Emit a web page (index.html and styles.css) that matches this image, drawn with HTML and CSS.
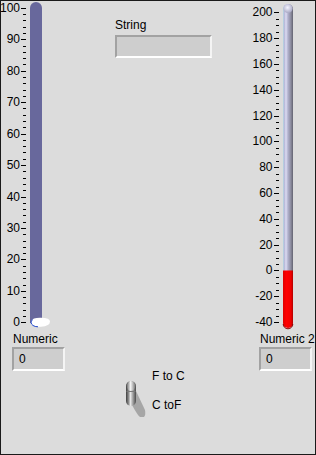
FILE: index.html
```html
<!DOCTYPE html>
<html>
<head>
<meta charset="utf-8">
<link rel="stylesheet" href="styles.css">
</head>
<body>
<div class="panel">
  <div class="col col-left">
    <svg class="gauge" width="66" height="332" viewBox="0 0 66 332">
      <g class="tick-label" text-anchor="end">
        <text x="20" y="12">100</text>
        <text x="20" y="43">90</text>
        <text x="20" y="75">80</text>
        <text x="20" y="106">70</text>
        <text x="20" y="138">60</text>
        <text x="20" y="169">50</text>
        <text x="20" y="201">40</text>
        <text x="20" y="232">30</text>
        <text x="20" y="263">20</text>
        <text x="20" y="295">10</text>
        <text x="20" y="326">0</text>
      </g>
      <path class="ticks" d="M21 8h5v1h-5zM21 39h5v1h-5zM21 71h5v1h-5zM21 102h5v1h-5zM21 134h5v1h-5zM21 165h5v1h-5zM21 197h5v1h-5zM21 228h5v1h-5zM21 259h5v1h-5zM21 291h5v1h-5zM21 322h5v1h-5z
      M23 14h3v1h-3zM23 20h3v1h-3zM23 27h3v1h-3zM23 33h3v1h-3z
      M23 46h3v1h-3zM23 52h3v1h-3zM23 58h3v1h-3zM23 64h3v1h-3z
      M23 77h3v1h-3zM23 83h3v1h-3zM23 90h3v1h-3zM23 96h3v1h-3z
      M23 108h3v1h-3zM23 115h3v1h-3zM23 121h3v1h-3zM23 127h3v1h-3z
      M23 140h3v1h-3zM23 146h3v1h-3zM23 152h3v1h-3zM23 159h3v1h-3z
      M23 171h3v1h-3zM23 178h3v1h-3zM23 184h3v1h-3zM23 190h3v1h-3z
      M23 203h3v1h-3zM23 209h3v1h-3zM23 215h3v1h-3zM23 222h3v1h-3z
      M23 234h3v1h-3zM23 241h3v1h-3zM23 247h3v1h-3zM23 253h3v1h-3z
      M23 266h3v1h-3zM23 272h3v1h-3zM23 278h3v1h-3zM23 285h3v1h-3z
      M23 297h3v1h-3zM23 303h3v1h-3zM23 310h3v1h-3zM23 316h3v1h-3z"/>
      <path class="slide-fill" d="M30 8a6 6 0 0 1 12 0V323H30Z"/>
      <path d="M31 321Q33 317.5 41 317.8Q50 318 50 321.5Q50 326 41 326.8Q33 327.2 31 324Z" fill="#ffffff"/>
      <path d="M32.5 319.5Q29.5 323 33 325.5Q35 326.8 38 326.8" fill="none" stroke="#1c44c8" stroke-width="1"/>
    </svg>
    <div class="label label-left">Numeric</div>
    <div class="numbox box-left">0</div>
  </div>

  <div class="col col-mid">
    <div class="label str-label">String</div>
    <div class="strbox"></div>
    <div class="toggle-row">
      <svg class="toggle" width="26" height="42" viewBox="0 0 26 42">
        <defs>
          <linearGradient id="tg" x1="0" y1="0" x2="1" y2="0">
            <stop offset="0" stop-color="#3e3e3e"/>
            <stop offset="0.25" stop-color="#8a8a8a"/>
            <stop offset="0.45" stop-color="#e6e6e6"/>
            <stop offset="0.65" stop-color="#ababab"/>
            <stop offset="1" stop-color="#4a4a4a"/>
          </linearGradient>
          <linearGradient id="tgtop" x1="0" y1="0" x2="1" y2="0">
            <stop offset="0" stop-color="#6a6a6a"/>
            <stop offset="0.45" stop-color="#f4f4f4"/>
            <stop offset="1" stop-color="#7a7a7a"/>
          </linearGradient>
        </defs>
        <path d="M8 19L13 14L22 33Q23 38 21 40L17 40Q15 39 9 28Z" fill="#a6a6a6"/>
        <rect x="3" y="4" width="10" height="25" rx="5" fill="url(#tg)"/>
        <ellipse cx="8" cy="9" rx="4.3" ry="4.5" fill="url(#tgtop)"/>
        <path d="M3.5 14.5h9" stroke="#7a7a7a" stroke-width="1"/>
      </svg>
      <div class="toggle-labels">
        <div class="label">F to C</div>
        <div class="label">C toF</div>
      </div>
    </div>
  </div>

  <div class="col col-right">
    <svg class="gauge" width="66" height="332" viewBox="0 0 66 332">
      <defs>
        <linearGradient id="tube" x1="0" y1="0" x2="1" y2="0">
          <stop offset="0" stop-color="#b6dfe6"/>
          <stop offset="0.12" stop-color="#b4b4d6"/>
          <stop offset="0.3" stop-color="#dcdcf2"/>
          <stop offset="0.5" stop-color="#b0b0cc"/>
          <stop offset="0.8" stop-color="#8a8a9c"/>
          <stop offset="1" stop-color="#626270"/>
        </linearGradient>
        <linearGradient id="red" x1="0" y1="0" x2="1" y2="0">
          <stop offset="0" stop-color="#e00000"/>
          <stop offset="0.35" stop-color="#ff0000"/>
          <stop offset="0.8" stop-color="#f00000"/>
          <stop offset="1" stop-color="#b00000"/>
        </linearGradient>
        <radialGradient id="dome" cx="0.45" cy="0.4" r="0.6">
          <stop offset="0" stop-color="#f4f4ff"/>
          <stop offset="1" stop-color="#a8a8c4"/>
        </radialGradient>
      </defs>
      <g class="tick-label" text-anchor="end">
        <text x="22.5" y="16">200</text>
        <text x="22.5" y="42">180</text>
        <text x="22.5" y="68">160</text>
        <text x="22.5" y="94">140</text>
        <text x="22.5" y="120">120</text>
        <text x="22.5" y="145">100</text>
        <text x="22.5" y="171">80</text>
        <text x="22.5" y="197">60</text>
        <text x="22.5" y="223">40</text>
        <text x="22.5" y="249">20</text>
        <text x="22.5" y="274">0</text>
        <text x="22.5" y="300">-20</text>
        <text x="22.5" y="326">-40</text>
      </g>
      <path class="ticks" d="M24 12h5v1h-5zM24 38h5v1h-5zM24 64h5v1h-5zM24 90h5v1h-5zM24 116h5v1h-5zM24 141h5v1h-5zM24 167h5v1h-5zM24 193h5v1h-5zM24 219h5v1h-5zM24 245h5v1h-5zM24 270h5v1h-5zM24 296h5v1h-5zM24 322h5v1h-5z
      M26 19h3v1h-3zM26 25h3v1h-3zM26 32h3v1h-3z
      M26 45h3v1h-3zM26 51h3v1h-3zM26 57h3v1h-3z
      M26 70h3v1h-3zM26 77h3v1h-3zM26 83h3v1h-3z
      M26 96h3v1h-3zM26 103h3v1h-3zM26 109h3v1h-3z
      M26 122h3v1h-3zM26 128h3v1h-3zM26 135h3v1h-3z
      M26 148h3v1h-3zM26 154h3v1h-3zM26 161h3v1h-3z
      M26 174h3v1h-3zM26 180h3v1h-3zM26 187h3v1h-3z
      M26 200h3v1h-3zM26 206h3v1h-3zM26 212h3v1h-3z
      M26 225h3v1h-3zM26 232h3v1h-3zM26 238h3v1h-3z
      M26 251h3v1h-3zM26 258h3v1h-3zM26 264h3v1h-3z
      M26 277h3v1h-3zM26 283h3v1h-3zM26 290h3v1h-3z
      M26 303h3v1h-3zM26 309h3v1h-3zM26 316h3v1h-3z"/>
      <path d="M33 9a5 5 0 0 1 10 0V323a5 5 0 0 1-10 0Z" fill="url(#tube)"/>
      <ellipse cx="38" cy="8.5" rx="4.6" ry="4.5" fill="url(#dome)"/>
      <path d="M33 270.5H43V323a5 5 0 0 1-10 0Z" fill="url(#red)"/>
      <path d="M33.2 324a4.8 4.8 0 0 0 9.6 0" fill="none" stroke="#8a0000" stroke-width="1"/>
    </svg>
    <div class="label label-right">Numeric 2</div>
    <div class="numbox box-right">0</div>
  </div>
</div>
</body>
</html>
```

FILE: styles.css
```css
html, body {
  margin: 0;
  padding: 0;
  background: #dcdcdc;
}

.panel {
  width: 316px;
  height: 455px;
  box-sizing: border-box;
  background: #dcdcdc;
  box-shadow: inset 0 0 0 1px #1a1a1a;
  display: flex;
  font-family: "Liberation Sans", Arial, sans-serif;
  font-size: 12px;
  line-height: 14px;
  color: #000;
  overflow: hidden;
}

.col {
  display: flex;
  flex-direction: column;
}

.col-left,
.col-right {
  width: 66px;
}

.col-mid {
  width: 184px;
}

.gauge {
  display: block;
}

.tick-label {
  font-family: "Liberation Sans", Arial, sans-serif;
  font-size: 12px;
  fill: #000;
}

.ticks {
  fill: #000;
}

.slide-fill {
  fill: #68689c;
}

.label {
  height: 14px;
  white-space: nowrap;
}

.label-left {
  margin-left: 13px;
}

.label-right {
  margin-left: 10px;
}

.numbox {
  width: 53px;
  height: 24px;
  box-sizing: border-box;
  margin-top: 1px;
  border-style: solid;
  border-width: 2px;
  border-color: #a2a2a2 #f4f4f4 #ffffff #a2a2a2;
  background: #cecece;
  padding-left: 5px;
  line-height: 20px;
}

.box-left {
  margin-left: 12px;
}

.box-right {
  margin-left: 9px;
}

.str-label {
  margin: 18px 0 0 49px;
}

.strbox {
  width: 97px;
  height: 23px;
  box-sizing: border-box;
  margin: 3px 0 0 49px;
  border-style: solid;
  border-width: 2px;
  border-color: #a2a2a2 #f4f4f4 #ffffff #a2a2a2;
  background: #cecece;
}

.toggle-row {
  display: flex;
  margin: 311px 0 0 57px;
}

.toggle {
  display: block;
  margin-top: 8px;
}

.toggle-labels {
  display: flex;
  flex-direction: column;
  gap: 15px;
  margin-left: 3px;
}
```
